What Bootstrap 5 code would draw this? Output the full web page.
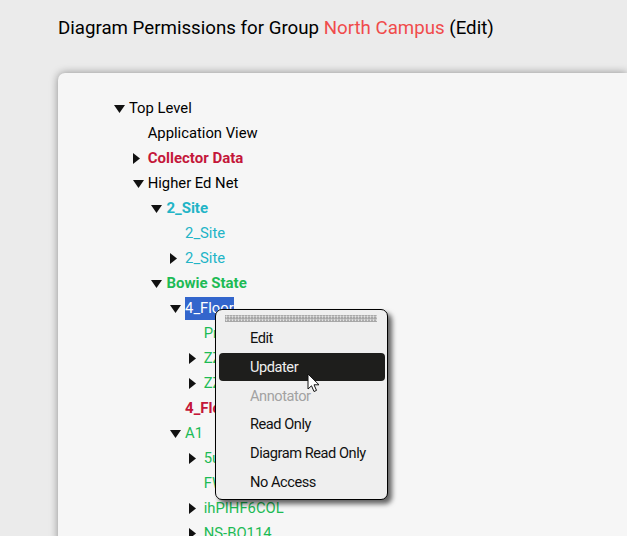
<!DOCTYPE html>
<html lang="en">
<head>
    <meta charset="UTF-8">
    <meta name="viewport" content="width=device-width, initial-scale=1.0">
    <title>Diagram Permissions</title>
    <link href="https://cdn.jsdelivr.net/npm/bootstrap@5.3.0/dist/css/bootstrap.min.css" rel="stylesheet">
    <style>
        html, body {
            height: 536px;
            overflow: hidden;
        }
        body {
            background-color: #ebebeb;
            font-family: Roboto, "Liberation Sans", sans-serif;
            color: #000;
        }
        .page-wrap {
            padding: 15px 0 0 58px;
        }
        .page-title {
            font-size: 18.7px;
            font-weight: 400;
            line-height: 26px;
            margin: 0 0 32px;
        }
        .title-accent { color: #f04b4b; }
        .perm-panel {
            background-color: #f6f6f6;
            border-radius: 7px 0 0 0;
            box-shadow: 0 0 9px rgba(0,0,0,.4);
            padding: 23px 0 0 56px;
            height: 470px;
        }
        .perm-tree, .perm-tree ul {
            list-style: none;
            margin: 0;
            padding: 0;
        }
        .perm-tree ul { padding-left: 18.7px; }
        .tree-row {
            display: flex;
            align-items: center;
            height: 25px;
            font-size: 14.8px;
        }
        .tree-arrow {
            width: 15px;
            flex: none;
        }
        .tree-arrow svg { display: block; }
        .tree-label {
            line-height: 23px;
        }
        .is-bold { font-weight: 700; font-size: 15px; }
        .c-red { color: #c4173a; }
        .c-cyan { color: #22b4c6; }
        .c-green { color: #1dbb55; }
        .tree-selected {
            background-color: #3366cc;
            color: #fff;
            width: 49px;
            overflow: hidden;
            white-space: nowrap;
        }
        .perm-menu {
            position: absolute;
            left: 215px;
            top: 309px;
            width: 173px;
            height: 191px;
            background-color: #efefef;
            border: 1px solid #000;
            border-radius: 7px;
            box-shadow: 4px 4px 5px rgba(0,0,0,.6);
            padding: 5px 2px 0 3px;
            font-size: 14.6px;
            letter-spacing: -.45px;
        }
        .menu-grip {
            height: 7px;
            margin: 0 8px 2px 6px;
            background-color: #a6a6a6;
            background-image: radial-gradient(circle at 1.5px 1.5px, #e2e2e2 .9px, transparent 1.2px);
            background-size: 3px 3.5px;
        }
        .menu-entry {
            height: 27.8px;
            margin-top: 1px;
            line-height: 28px;
            padding-left: 31px;
            border-radius: 4px;
            color: #111;
        }
        .menu-entry.is-active {
            background-color: #1e1e1c;
            color: #eee;
        }
        .menu-entry.is-off { color: #a2a2a2; }
        .mouse-cursor {
            position: absolute;
            left: 307px;
            top: 373px;
        }
    </style>
</head>
<body>
    <div class="page-wrap">
        <h1 class="page-title">Diagram Permissions for Group <span class="title-accent">North Campus</span> (Edit)</h1>

        <div class="perm-panel">
            <ul class="perm-tree">
                <li>
                    <div class="tree-row"><span class="tree-arrow"><svg width="11" height="8"><path d="M0 0H11L5.5 8Z" fill="#111"/></svg></span><span class="tree-label">Top Level</span></div>
                    <ul>
                        <li><div class="tree-row"><span class="tree-arrow"></span><span class="tree-label">Application View</span></div></li>
                        <li><div class="tree-row"><span class="tree-arrow"><svg width="8" height="11"><path d="M0 0V11L7 5.5Z" fill="#111"/></svg></span><span class="tree-label is-bold c-red">Collector Data</span></div></li>
                        <li>
                            <div class="tree-row"><span class="tree-arrow"><svg width="11" height="8"><path d="M0 0H11L5.5 8Z" fill="#111"/></svg></span><span class="tree-label">Higher Ed Net</span></div>
                            <ul>
                                <li>
                                    <div class="tree-row"><span class="tree-arrow"><svg width="11" height="8"><path d="M0 0H11L5.5 8Z" fill="#111"/></svg></span><span class="tree-label is-bold c-cyan">2_Site</span></div>
                                    <ul>
                                        <li><div class="tree-row"><span class="tree-arrow"></span><span class="tree-label c-cyan">2_Site</span></div></li>
                                        <li><div class="tree-row"><span class="tree-arrow"><svg width="8" height="11"><path d="M0 0V11L7 5.5Z" fill="#111"/></svg></span><span class="tree-label c-cyan">2_Site</span></div></li>
                                    </ul>
                                </li>
                                <li>
                                    <div class="tree-row"><span class="tree-arrow"><svg width="11" height="8"><path d="M0 0H11L5.5 8Z" fill="#111"/></svg></span><span class="tree-label is-bold c-green">Bowie State</span></div>
                                    <ul>
                                        <li>
                                            <div class="tree-row"><span class="tree-arrow"><svg width="11" height="8"><path d="M0 0H11L5.5 8Z" fill="#111"/></svg></span><span class="tree-label tree-selected">4_Floor</span></div>
                                            <ul>
                                                <li><div class="tree-row"><span class="tree-arrow"></span><span class="tree-label c-green">Printers</span></div></li>
                                                <li><div class="tree-row"><span class="tree-arrow"><svg width="8" height="11"><path d="M0 0V11L7 5.5Z" fill="#111"/></svg></span><span class="tree-label c-green">ZZ-01</span></div></li>
                                                <li><div class="tree-row"><span class="tree-arrow"><svg width="8" height="11"><path d="M0 0V11L7 5.5Z" fill="#111"/></svg></span><span class="tree-label c-green">ZZ-02</span></div></li>
                                            </ul>
                                        </li>
                                        <li><div class="tree-row"><span class="tree-arrow"></span><span class="tree-label is-bold c-red">4_Floor</span></div></li>
                                        <li>
                                            <div class="tree-row"><span class="tree-arrow"><svg width="11" height="8"><path d="M0 0H11L5.5 8Z" fill="#111"/></svg></span><span class="tree-label c-green">A1</span></div>
                                            <ul>
                                                <li><div class="tree-row"><span class="tree-arrow"><svg width="8" height="11"><path d="M0 0V11L7 5.5Z" fill="#111"/></svg></span><span class="tree-label c-green">5u-Core</span></div></li>
                                                <li><div class="tree-row"><span class="tree-arrow"></span><span class="tree-label c-green">FW-01</span></div></li>
                                                <li><div class="tree-row"><span class="tree-arrow"><svg width="8" height="11"><path d="M0 0V11L7 5.5Z" fill="#111"/></svg></span><span class="tree-label c-green">ihPIHF6COL</span></div></li>
                                                <li><div class="tree-row"><span class="tree-arrow"><svg width="8" height="11"><path d="M0 0V11L7 5.5Z" fill="#111"/></svg></span><span class="tree-label c-green">NS-BO114</span></div></li>
                                            </ul>
                                        </li>
                                    </ul>
                                </li>
                            </ul>
                        </li>
                    </ul>
                </li>
            </ul>
        </div>
    </div>

    <!-- Context menu over the tree -->
    <div class="perm-menu">
        <div class="menu-grip"></div>
        <div class="menu-entry">Edit</div>
        <div class="menu-entry is-active">Updater</div>
        <div class="menu-entry is-off">Annotator</div>
        <div class="menu-entry">Read Only</div>
        <div class="menu-entry">Diagram Read Only</div>
        <div class="menu-entry">No Access</div>
    </div>
    <svg class="mouse-cursor" width="14" height="20" viewBox="0 0 14 20"><path d="M1 1V16L4.5 12.8L7 18.5L9.5 17.4L7 11.8H12Z" fill="#fff" stroke="#111" stroke-width="1"/></svg>

    <script src="https://cdn.jsdelivr.net/npm/bootstrap@5.3.0/dist/js/bootstrap.bundle.min.js"></script>
</body>
</html>
